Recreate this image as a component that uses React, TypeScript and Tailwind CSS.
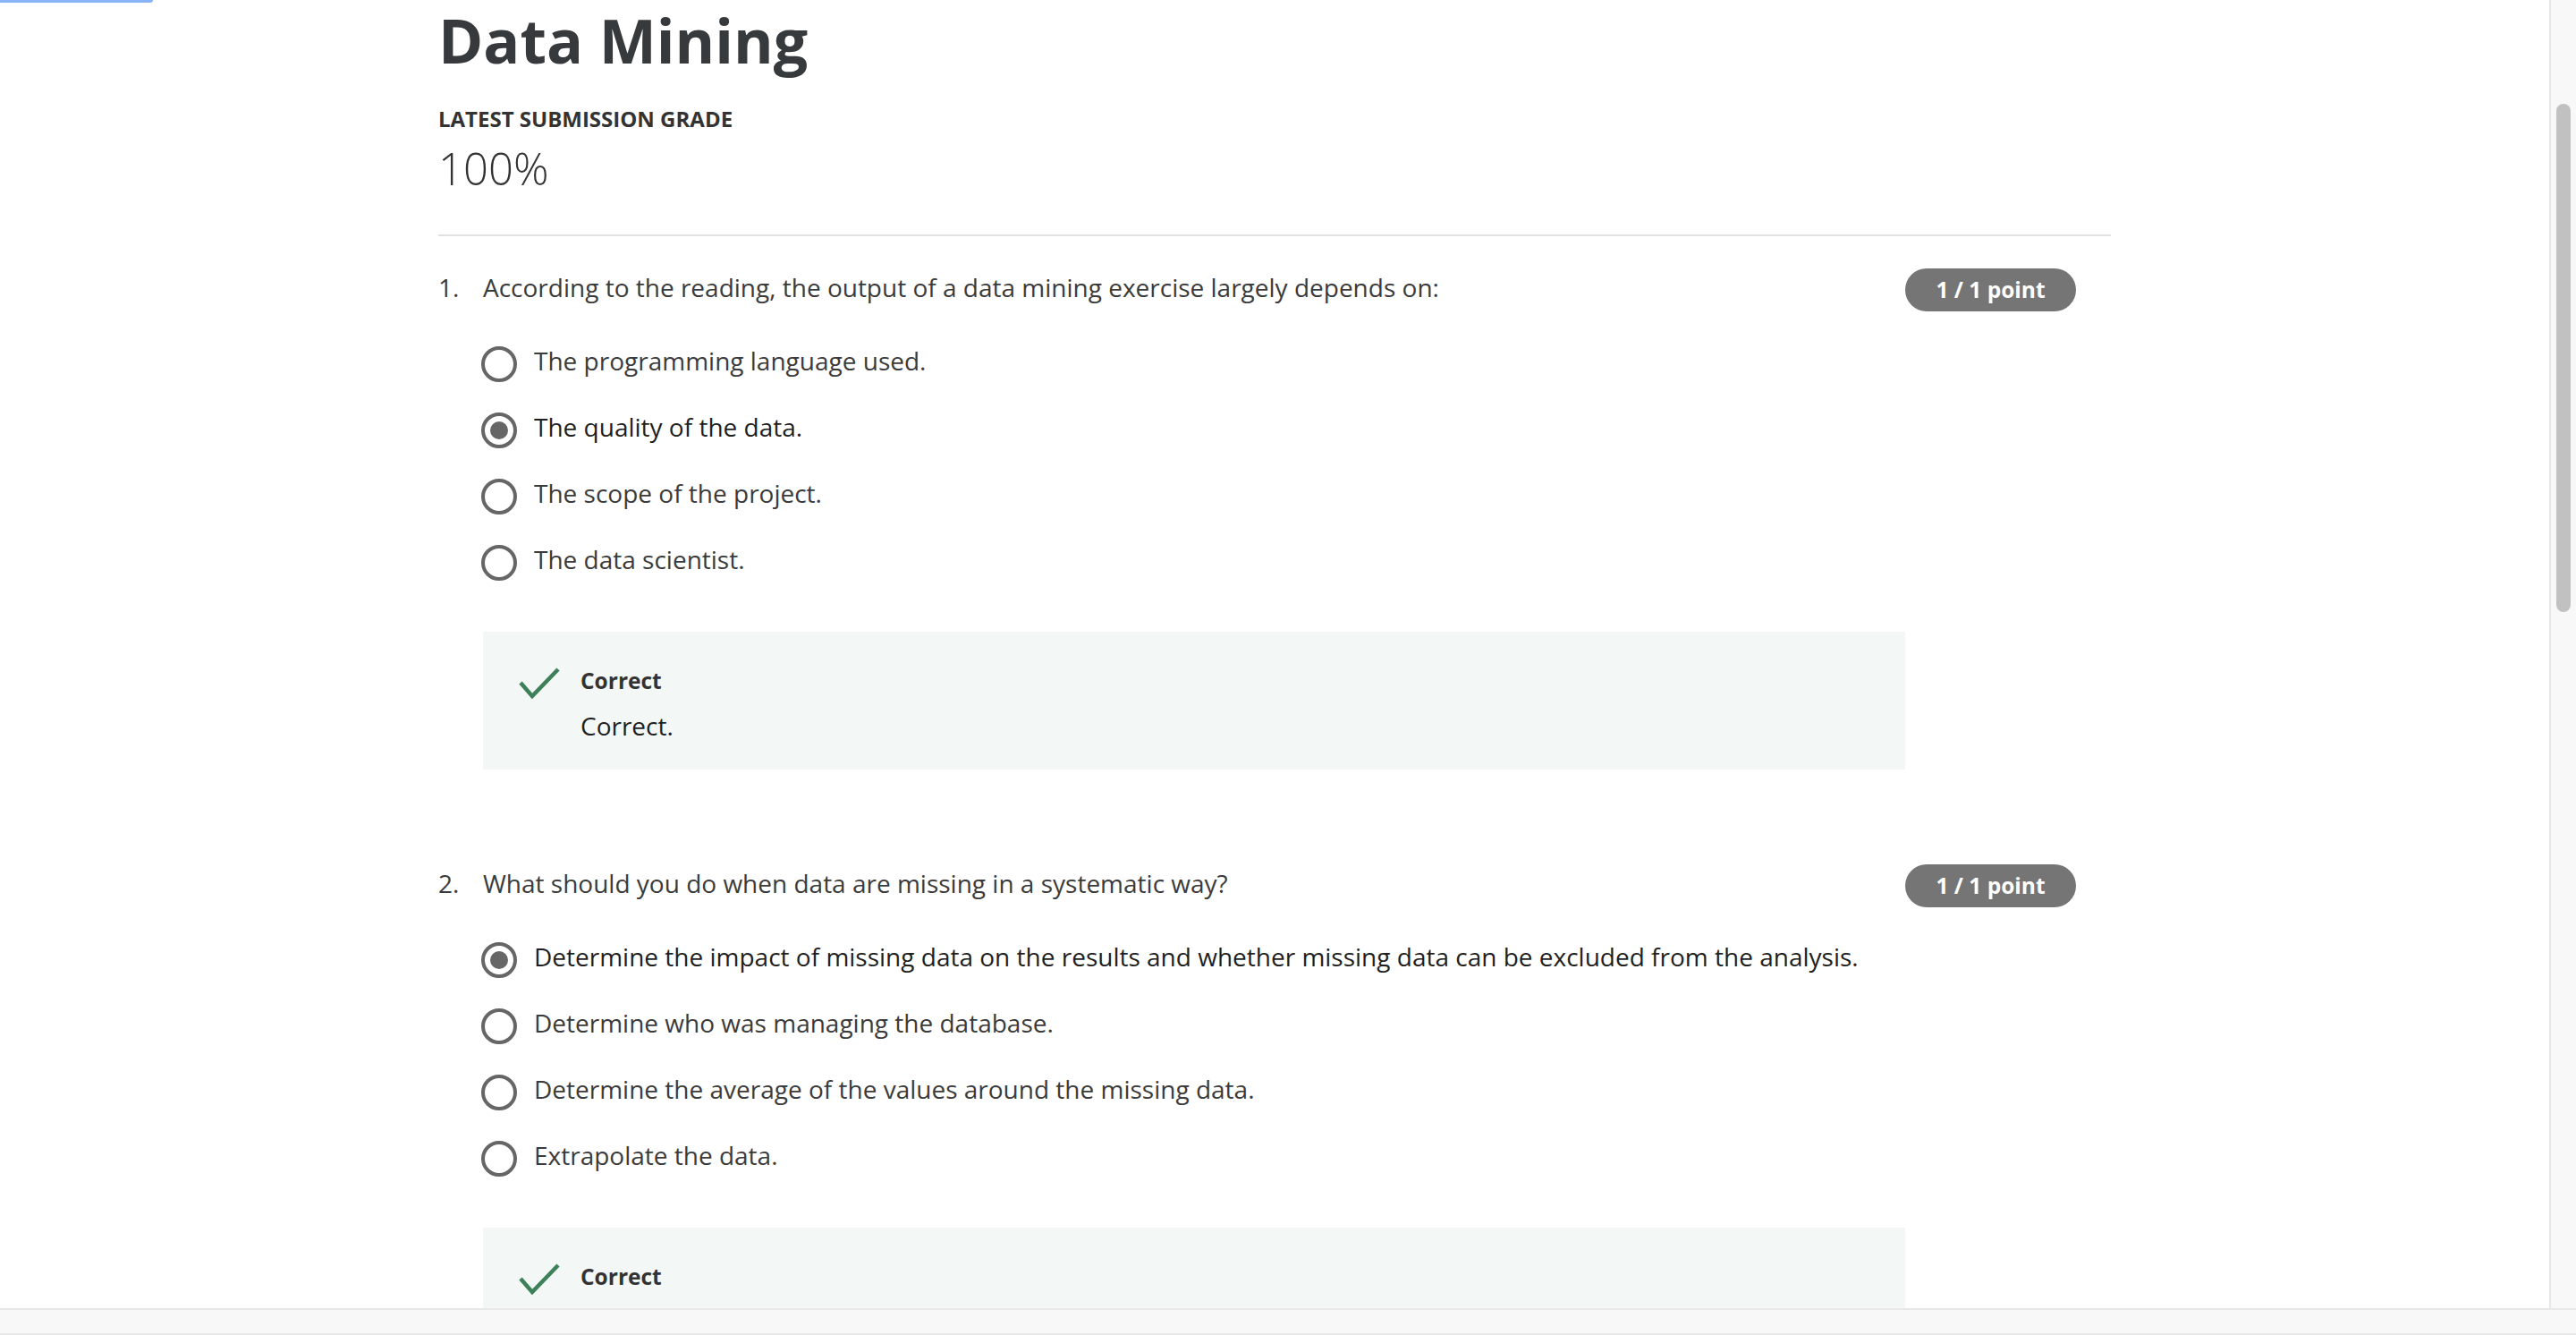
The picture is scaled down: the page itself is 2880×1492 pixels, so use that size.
import React from "react";

type Q = {
  n: number;
  text: string;
  options: string[];
  selected: number;
};

const questions: Q[] = [
  {
    n: 1,
    text: "According to the reading, the output of a data mining exercise largely depends on:",
    options: [
      "The programming language used.",
      "The quality of the data.",
      "The scope of the project.",
      "The data scientist.",
    ],
    selected: 1,
  },
  {
    n: 2,
    text: "What should you do when data are missing in a systematic way?",
    options: [
      "Determine the impact of missing data on the results and whether missing data can be excluded from the analysis.",
      "Determine who was managing the database.",
      "Determine the average of the values around the missing data.",
      "Extrapolate the data.",
    ],
    selected: 0,
  },
];

function Radio({ checked }: { checked: boolean }) {
  return (
    <div className="mt-[18px] -ml-[2px] flex h-[40px] w-[40px] shrink-0 items-center justify-center rounded-full border-[4px] border-[#666666] bg-white">
      {checked && <div className="h-[20px] w-[20px] rounded-full bg-[#666666]" />}
    </div>
  );
}

function Question({ q }: { q: Q }) {
  return (
    <div>
      <div className="flex h-[48px] items-start">
        <div className="w-[50px] shrink-0 text-[28px] leading-[42px] text-[#3b3b3b]">{q.n}.</div>
        <div className="w-[1590px] shrink-0 text-[28px] leading-[42px] text-[#3b3b3b]">{q.text}</div>
        <div className="flex h-[48px] w-[191px] items-center justify-center rounded-full bg-[#757575] text-[24.5px] font-bold leading-[34px] text-white">
          1 / 1 point
        </div>
      </div>
      <div className="ml-[50px] mt-[21px] flex flex-col">
        {q.options.map((o, i) => (
          <div key={i} className="flex h-[74px] items-start">
            <Radio checked={i === q.selected} />
            <div
              className={
                "ml-[19px] mt-[13px] whitespace-nowrap text-[28px] leading-[42px] " +
                (i === q.selected ? "text-[#1f1f1f]" : "text-[#3b3b3b]")
              }
            >
              {o}
            </div>
          </div>
        ))}
      </div>
      <div className="ml-[50px] mt-[41px] flex h-[154px] w-[1590px] items-start bg-[#f3f8f6] pl-[40px] pt-[37px]">
        <svg className="mt-[2px] h-[36px] w-[46px] shrink-0" viewBox="0 0 46 36" fill="none">
          <path d="M2 18 L15 33 L44 3" stroke="#3d8059" strokeWidth="4.5" strokeLinejoin="miter" />
        </svg>
        <div className="ml-[23px] flex flex-col">
          <div className="text-[24.5px] font-bold leading-[36px] text-[#333333]">Correct</div>
          <div className="mt-[11px] text-[28px] leading-[42px] text-[#1f1f1f]">Correct.</div>
        </div>
      </div>
    </div>
  );
}

export default function App() {
  return (
    <div
      className="h-[1492px] w-[2880px] overflow-hidden bg-white"
      style={{ fontFamily: "'Open Sans', 'Noto Sans', sans-serif" }}
    >
      <div className="flex h-[1462px]">
        <main className="h-full w-[2850px] overflow-hidden">
          <div className="h-[3px] w-[171px] rounded-br-sm bg-[#8ab4f8]" />
          <div className="ml-[490px] w-[1870px]">
            <h1 className="-mt-[5px] text-[68px] font-bold leading-[93px] text-[#373a3c]">Data Mining</h1>
            <div className="mt-[27px] text-[24px] font-bold uppercase leading-[30px] text-[#333333]">
              Latest Submission Grade
            </div>
            <div className="mt-[10px] text-[49px] font-light leading-[60px] text-[#333333]">100%</div>
            <div className="mt-[44px] h-[2px] w-full bg-[#e1e1e1]" />
            <div className="mt-[36px] flex flex-col gap-[106px]">
              {questions.map((q) => (
                <Question key={q.n} q={q} />
              ))}
            </div>
          </div>
        </main>
        <div className="h-full w-[30px] shrink-0 border-l-[2px] border-[#e8e8e8] bg-[#f8f8f8] pl-[6px] pt-[116px]">
          <div className="h-[568px] w-[16px] rounded-full bg-[#c1c1c1]" />
        </div>
      </div>
      <div className="h-[30px] w-full border-t-[2px] border-b-[2px] border-[#e8e8e8] bg-[#f8f8f8]" />
    </div>
  );
}
